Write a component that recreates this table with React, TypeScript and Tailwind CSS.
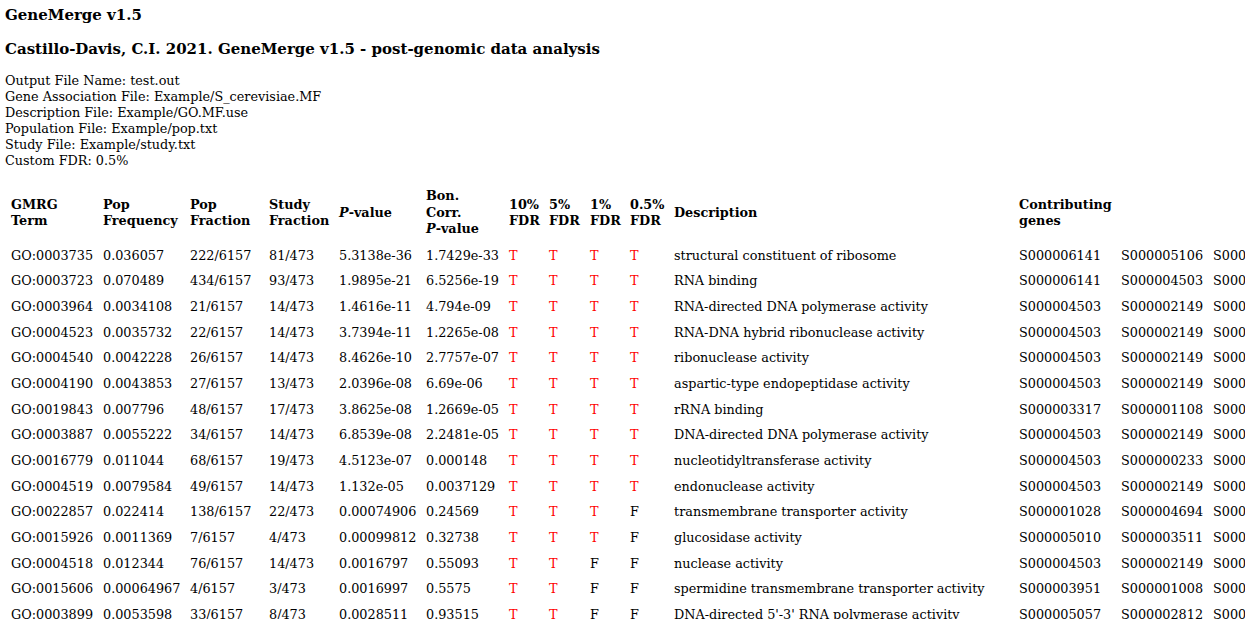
const info = [
  "Output File Name: test.out",
  "Gene Association File: Example/S_cerevisiae.MF",
  "Description File: Example/GO.MF.use",
  "Population File: Example/pop.txt",
  "Study File: Example/study.txt",
  "Custom FDR: 0.5%",
];

type Row = [string, string, string, string, string, string, string, string, string, string];

// term, pop freq, pop frac, study frac, p, bon p, fdr flags, description, gene1, gene2
const rows: Row[] = [
  ["GO:0003735", "0.036057", "222/6157", "81/473", "5.3138e-36", "1.7429e-33", "TTTT", "structural constituent of ribosome", "S000006141", "S000005106"],
  ["GO:0003723", "0.070489", "434/6157", "93/473", "1.9895e-21", "6.5256e-19", "TTTT", "RNA binding", "S000006141", "S000004503"],
  ["GO:0003964", "0.0034108", "21/6157", "14/473", "1.4616e-11", "4.794e-09", "TTTT", "RNA-directed DNA polymerase activity", "S000004503", "S000002149"],
  ["GO:0004523", "0.0035732", "22/6157", "14/473", "3.7394e-11", "1.2265e-08", "TTTT", "RNA-DNA hybrid ribonuclease activity", "S000004503", "S000002149"],
  ["GO:0004540", "0.0042228", "26/6157", "14/473", "8.4626e-10", "2.7757e-07", "TTTT", "ribonuclease activity", "S000004503", "S000002149"],
  ["GO:0004190", "0.0043853", "27/6157", "13/473", "2.0396e-08", "6.69e-06", "TTTT", "aspartic-type endopeptidase activity", "S000004503", "S000002149"],
  ["GO:0019843", "0.007796", "48/6157", "17/473", "3.8625e-08", "1.2669e-05", "TTTT", "rRNA binding", "S000003317", "S000001108"],
  ["GO:0003887", "0.0055222", "34/6157", "14/473", "6.8539e-08", "2.2481e-05", "TTTT", "DNA-directed DNA polymerase activity", "S000004503", "S000002149"],
  ["GO:0016779", "0.011044", "68/6157", "19/473", "4.5123e-07", "0.000148", "TTTT", "nucleotidyltransferase activity", "S000004503", "S000000233"],
  ["GO:0004519", "0.0079584", "49/6157", "14/473", "1.132e-05", "0.0037129", "TTTT", "endonuclease activity", "S000004503", "S000002149"],
  ["GO:0022857", "0.022414", "138/6157", "22/473", "0.00074906", "0.24569", "TTTF", "transmembrane transporter activity", "S000001028", "S000004694"],
  ["GO:0015926", "0.0011369", "7/6157", "4/473", "0.00099812", "0.32738", "TTTF", "glucosidase activity", "S000005010", "S000003511"],
  ["GO:0004518", "0.012344", "76/6157", "14/473", "0.0016797", "0.55093", "TTFF", "nuclease activity", "S000004503", "S000002149"],
  ["GO:0015606", "0.00064967", "4/6157", "3/473", "0.0016997", "0.5575", "TTFF", "spermidine transmembrane transporter activity", "S000003951", "S000001008"],
  ["GO:0003899", "0.0053598", "33/6157", "8/473", "0.0028511", "0.93515", "TTFF", "DNA-directed 5'-3' RNA polymerase activity", "S000005057", "S000002812"],
];

const td = "h-[25.66px] pl-[6px] align-middle whitespace-nowrap";
const th = "h-[58.4px] pl-[6px] text-left align-middle font-bold leading-[16.5px] whitespace-nowrap";

function Flag({ v }: { v: string }) {
  return <td className={`${td} ${v === "T" ? "text-[#ff0000]" : ""}`}>{v}</td>;
}

export default function App() {
  return (
    <div className="w-full overflow-hidden bg-white pl-[5px] pt-[6px] font-['DejaVu_Serif',serif] text-[12.8px] text-black">
      <h3 className="text-[15px] font-bold leading-[18px]">GeneMerge v1.5</h3>
      <h3 className="mt-[16px] text-[15px] font-bold leading-[18px]">
        Castillo-Davis, C.I. 2021. GeneMerge v1.5 - post-genomic data analysis
      </h3>
      <div className="mt-[15px] leading-[16px]">
        {info.map((line) => (
          <div key={line}>{line}</div>
        ))}
      </div>
      <table className="mt-[15px] w-[1294px] table-fixed border-collapse">
        <colgroup>
          <col className="w-[92px]" />
          <col className="w-[87px]" />
          <col className="w-[79px]" />
          <col className="w-[70px]" />
          <col className="w-[87px]" />
          <col className="w-[83px]" />
          <col className="w-[40px]" />
          <col className="w-[41px]" />
          <col className="w-[40px]" />
          <col className="w-[44px]" />
          <col className="w-[345px]" />
          <col className="w-[102px]" />
          <col className="w-[92px]" />
          <col className="w-[92px]" />
        </colgroup>
        <thead>
          <tr>
            <th className={th}>GMRG<br />Term</th>
            <th className={th}>Pop<br />Frequency</th>
            <th className={th}>Pop<br />Fraction</th>
            <th className={th}>Study<br />Fraction</th>
            <th className={th}><i>P</i>-value</th>
            <th className={th}>Bon.<br />Corr.<br /><i>P</i>-value</th>
            <th className={th}>10%<br />FDR</th>
            <th className={th}>5%<br />FDR</th>
            <th className={th}>1%<br />FDR</th>
            <th className={th}>0.5%<br />FDR</th>
            <th className={th}>Description</th>
            <th className={th}>Contributing<br />genes</th>
            <th className={th}></th>
            <th className={th}></th>
          </tr>
        </thead>
        <tbody>
          {rows.map((r) => (
            <tr key={r[0]}>
              <td className={td}>{r[0]}</td>
              <td className={td}>{r[1]}</td>
              <td className={td}>{r[2]}</td>
              <td className={td}>{r[3]}</td>
              <td className={td}>{r[4]}</td>
              <td className={td}>{r[5]}</td>
              {r[6].split("").map((f, i) => (
                <Flag key={i} v={f} />
              ))}
              <td className={td}>{r[7]}</td>
              <td className={td}>{r[8]}</td>
              <td className={td}>{r[9]}</td>
              <td className={td}>S000001234</td>
              <td className={td}></td>
            </tr>
          ))}
        </tbody>
      </table>
    </div>
  );
}
